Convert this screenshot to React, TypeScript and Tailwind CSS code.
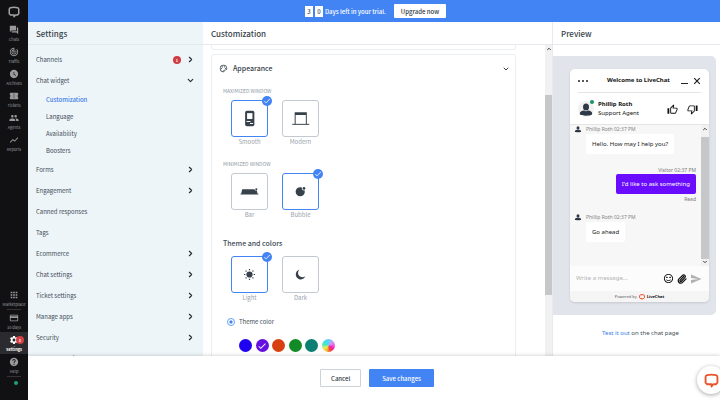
import { useState, type ComponentType, type ReactNode } from 'react';
import {
  MdApps,
  MdCheck,
  MdConfirmationNumber,
  MdCreditCard,
  MdForum,
  MdHelp,
  MdOutlinePalette,
  MdOutlineThumbDown,
  MdOutlineThumbUp,
  MdPeople,
  MdSend,
  MdSentimentSatisfiedAlt,
  MdSettings,
  MdShowChart,
  MdTrackChanges,
  MdWatchLater,
} from 'react-icons/md';
import { ChevronDown, ChevronRight, ChevronUp, Paperclip } from 'lucide-react';

type IconType = ComponentType<{ className?: string }>;

/* ---------- Left navigation rail ---------- */

function LogoMark({ className, stroke = 3 }: { className?: string; stroke?: number }) {
  return (
    <svg viewBox="0 0 24 24" className={className} fill="none" stroke="currentColor" strokeWidth={stroke} strokeLinejoin="round" aria-hidden="true">
      <path d="M5 3.500C9.500 2.400 14.500 2.400 19 3.500C20.500 3.900 21.500 5 21.500 6.500V15.500L19 18H15L12 21.500V18H5L2.500 15.500V6.500C2.500 5 3.500 3.900 5 3.500Z" />
    </svg>
  );
}

function NavItem({ icon: Icon, label, active, badge }: { icon: IconType; label: string; active?: boolean; badge?: string }) {
  return (
    <a
      href="#"
      className={`relative flex h-[22px] shrink-0 flex-col items-center justify-center text-[4px] leading-[6px] ${
        active ? 'bg-[#2b2b2f] font-bold text-white' : 'text-[#9a9a9d]'
      }`}
    >
      <Icon className="mb-px size-[10px]" />
      {label}
      {badge && (
        <span className="absolute top-[4px] right-[4px] flex size-[8px] items-center justify-center rounded-full bg-[#d64045] text-[4px] text-white">
          {badge}
        </span>
      )}
    </a>
  );
}

function NavRail() {
  return (
    <nav className="flex w-7 shrink-0 flex-col bg-[#111114]">
      <LogoMark className="mx-auto mt-[6px] mb-[4px] size-[12px] shrink-0 text-[#a2a2a5]" />
      <NavItem icon={MdForum} label="Chats" />
      <NavItem icon={MdTrackChanges} label="Traffic" />
      <NavItem icon={MdWatchLater} label="Archives" />
      <NavItem icon={MdConfirmationNumber} label="Tickets" />
      <NavItem icon={MdPeople} label="Agents" />
      <NavItem icon={MdShowChart} label="Reports" />
      <div className="mt-auto flex flex-col">
        <NavItem icon={MdApps} label="Marketplace" />
        <hr className="mx-[7px] border-[#3a3232]" />
        <NavItem icon={MdCreditCard} label="30 days" />
        <NavItem icon={MdSettings} label="Settings" badge="1" active />
        <NavItem icon={MdHelp} label="Help" />
        <hr className="mx-[7px] border-[#3a3232]" />
        <span className="mt-[4px] mr-[10px] mb-[15px] size-[4px] self-end rounded-full bg-[#1fa06c]" />
      </div>
    </nav>
  );
}

/* ---------- Settings menu ---------- */

type MenuEntry = { label: string; arrow?: boolean; open?: boolean; badge?: string; children?: string[] };

const menu: MenuEntry[] = [
  { label: 'Channels', arrow: true, badge: '1' },
  { label: 'Chat widget', open: true, children: ['Customization', 'Language', 'Availability', 'Boosters'] },
  { label: 'Forms', arrow: true },
  { label: 'Engagement', arrow: true },
  { label: 'Canned responses' },
  { label: 'Tags' },
  { label: 'Ecommerce', arrow: true },
  { label: 'Chat settings', arrow: true },
  { label: 'Ticket settings', arrow: true },
  { label: 'Manage apps', arrow: true },
  { label: 'Security', arrow: true },
  { label: 'Data Tools Privacy' },
];

function ColumnTitle({ children, className }: { children: ReactNode; className: string }) {
  return (
    <h2 className={`flex h-[23px] shrink-0 items-center border-b border-[#e6eaee] pt-[2px] text-[8px] font-medium text-[#38414a] ${className}`}>
      {children}
    </h2>
  );
}

function SettingsMenu() {
  return (
    <aside className="flex w-[175px] shrink-0 flex-col overflow-hidden bg-[#eef5f9]">
      <ColumnTitle className="px-2">Settings</ColumnTitle>
      <ul className="pt-1">
        {menu.map((m) => (
          <li key={m.label}>
            <a href="#" className="flex h-[21px] items-center pr-[8px] pl-2 text-[6px] text-[#424d57]">
              <span className="mr-auto">{m.label}</span>
              {m.badge && (
                <span className="mr-[5px] flex size-[8px] items-center justify-center rounded-full bg-[#d13b40] text-[4px] font-bold text-white">
                  {m.badge}
                </span>
              )}
              {m.arrow && <ChevronRight className="size-[9px] text-[#222b33]" strokeWidth={3} />}
              {m.open && <ChevronDown className="size-[9px] text-[#222b33]" strokeWidth={3} />}
            </a>
            {m.children && (
              <ul>
                {m.children.map((c, i) => (
                  <li key={c}>
                    <a href="#" className={`flex h-[17px] items-center pl-[18px] text-[6px] ${i === 0 ? 'font-medium text-[#3a7be8]' : 'text-[#424d57]'}`}>
                      {c}
                    </a>
                  </li>
                ))}
              </ul>
            )}
          </li>
        ))}
      </ul>
    </aside>
  );
}

/* ---------- Customization column ---------- */

function Scrollbar({ className, thumb, endArrow }: { className: string; thumb: string; endArrow?: boolean }) {
  return (
    <div className={`flex shrink-0 flex-col items-center bg-[#f1f1f2] ${className}`} aria-hidden="true">
      <ChevronUp className="my-px size-[6px] shrink-0 text-[#444]" strokeWidth={4} />
      <span className={`w-full bg-[#c6c7c9] ${thumb}`} />
      {endArrow && <ChevronDown className="mt-auto mb-px size-[6px] shrink-0 text-[#444]" strokeWidth={4} />}
    </div>
  );
}

function Glyph({ name }: { name: string }) {
  return (
    <svg viewBox="0 0 36 36" className="size-full" fill="#37414c" aria-hidden="true">
      {name === 'Smooth' && (
        <>
          <rect x="13.500" y="10" width="9.500" height="16" rx="1.800" />
          <rect x="15.500" y="12.500" width="5.500" height="6" fill="#fff" />
          <path d="M15 20.500h4v1.200h-4zM18.500 22.500h3v1.200h-3z" fill="#fff" />
        </>
      )}
      {name === 'Modern' && (
        <>
          <path d="M12 11.500h12.500V24h-1V14.500H13V24h-1z" />
          <rect x="9.500" y="23.500" width="17.500" height="1" />
        </>
      )}
      {name === 'Bar' && (
        <>
          <path d="M10.500 15.700h12.500l.8 1.200h1.700l.8 3.300h.9v1H8.700v-1h.7z" />
          <circle cx="25" cy="15.700" r="1.100" />
        </>
      )}
      {name === 'Bubble' && (
        <>
          <circle cx="17.700" cy="18.200" r="4.700" />
          <circle cx="21.500" cy="14.800" r="2.100" fill="#fff" />
          <circle cx="21.600" cy="14.800" r="1.400" />
        </>
      )}
      {name === 'Light' && (
        <>
          <circle cx="18" cy="18" r="3.200" />
          <path
            d="M18 12.300v1.400M18 22.300v1.400M12.300 18h1.400M22.300 18h1.400M14 14l.9.900M21.100 21.100l.9.900M14 22l.9-.9M21.100 14.900l.9-.9"
            stroke="#37414c"
            strokeWidth="1.200"
          />
        </>
      )}
      {name === 'Dark' && <path d="M17 13a5.100 5.100 0 1 0 6 6.800a4.500 4.500 0 0 1-6-6.800z" />}
    </svg>
  );
}

function TileGroup({ legend, name, options, initial }: { legend: ReactNode; name: string; options: string[]; initial: string }) {
  const [value, setValue] = useState(initial);
  return (
    <fieldset>
      {legend}
      <div className="flex gap-[14px] pl-2">
        {options.map((o) => {
          const on = o === value;
          return (
            <label key={o} className="relative flex w-[37px] flex-col text-center text-[6px] leading-[9px] text-[#9aa3ad]">
              <input type="radio" name={name} checked={on} onChange={() => setValue(o)} className="sr-only" />
              <span className={`block h-[37px] rounded-[3px] border bg-white ${on ? 'border-[#4384f5]' : 'border-[#c3c9d0]'}`}>
                <Glyph name={o} />
              </span>
              {o}
              {on && (
                <span className="absolute -top-[4px] -right-[4px] flex size-[10px] items-center justify-center rounded-full bg-[#4384f5] text-white">
                  <MdCheck className="size-[8px]" />
                </span>
              )}
            </label>
          );
        })}
      </div>
    </fieldset>
  );
}

const swatches = [
  { name: 'Blue', fill: 'bg-[#1f00f0]' },
  { name: 'Purple', fill: 'bg-[#6610e0]' },
  { name: 'Orange', fill: 'bg-[#d9400f]' },
  { name: 'Green', fill: 'bg-[#128a26]' },
  { name: 'Teal', fill: 'bg-[#0b7f72]' },
  { name: 'Custom', fill: 'bg-[conic-gradient(from_0deg,#5fd0f5,#b9a6f8,#f06ae0,#f01fc0,#f5403a,#f7c02a,#d8f060,#4fe8b0,#3fe0f0,#5fd0f5)]' },
];

function ThemeColor() {
  const [color, setColor] = useState('Purple');
  return (
    <fieldset>
      <label className="mt-[14px] flex items-center gap-[4px] pl-[4px] text-[6px] leading-[12px] text-[#424d57]">
        <input
          type="radio"
          name="color-mode"
          defaultChecked
          className="size-[8px] appearance-none rounded-full border border-[#6b9ff7] bg-white checked:bg-[radial-gradient(circle,#4384f5_30%,#fff_45%)]"
        />
        Theme color
      </label>
      <div className="mt-[11px] flex w-[112px] justify-between pl-4">
        {swatches.map((s) => (
          <label key={s.name} className={`flex size-[13px] items-center justify-center rounded-full ${s.fill}`}>
            <input type="radio" name="color" aria-label={s.name} checked={color === s.name} onChange={() => setColor(s.name)} className="sr-only" />
            {color === s.name && <MdCheck className="size-[10px] text-white" />}
          </label>
        ))}
      </div>
    </fieldset>
  );
}

function SectionLabel({ children }: { children: ReactNode }) {
  return <legend className="mb-[5px] text-[5px] leading-[8px] text-[#8d97a1]">{children}</legend>;
}

function Customization() {
  return (
    <section className="flex min-w-0 flex-1 flex-col overflow-hidden">
      <ColumnTitle className="px-2">Customization</ColumnTitle>
      <div className="flex min-h-0 flex-1">
        <div className="min-w-0 flex-1 overflow-hidden pr-[29px] pl-2">
          <div className="h-[5px] rounded-b-[3px] border-x border-b border-[#eceff2]" />
          <div className="mt-[4px] rounded-t-[3px] border border-[#eceff2] px-[7px] pb-8">
            <button type="button" className="flex h-[27px] w-full items-center text-[7px] font-medium text-[#38414a]">
              <MdOutlinePalette className="mr-[5px] size-[9px]" />
              Appearance
              <ChevronDown className="mr-[-2px] ml-auto size-[8px]" strokeWidth={3} />
            </button>
            <div className="px-1">
              <div className="pt-[5px]">
                <TileGroup legend={<SectionLabel>MAXIMIZED WINDOW</SectionLabel>} name="maximized" options={['Smooth', 'Modern']} initial="Smooth" />
              </div>
              <div className="pt-[14px]">
                <TileGroup legend={<SectionLabel>MINIMIZED WINDOW</SectionLabel>} name="minimized" options={['Bar', 'Bubble']} initial="Bubble" />
              </div>
              <div className="pt-[19px]">
                <TileGroup
                  legend={<legend className="mb-[8px] text-[7px] leading-[10px] font-medium text-[#424d57]">Theme and colors</legend>}
                  name="theme"
                  options={['Light', 'Dark']}
                  initial="Light"
                />
              </div>
              <ThemeColor />
            </div>
          </div>
        </div>
        <Scrollbar className="w-[7px]" thumb="mt-[42px] h-[200px]" />
      </div>
    </section>
  );
}

/* ---------- Chat preview ---------- */

function Avatar({ className }: { className: string }) {
  return (
    <span className={`block shrink-0 overflow-hidden rounded-full text-[#2f3946] ${className}`}>
      <svg viewBox="0 0 16 16" className="size-full" fill="currentColor" aria-hidden="true">
        <ellipse cx="8" cy="6" rx="3" ry="3.600" />
        <path d="M1.500 13.500c0-2.800 2.500-4 4.700-4.100c1 1 2.600 1 3.600 0c2.200.1 4.700 1.300 4.700 4.100c-2 1.600-11 1.600-13 0z" />
      </svg>
    </span>
  );
}

function AgentMessage({ children }: { children: ReactNode }) {
  return (
    <div className="flex gap-[4px]">
      <Avatar className="size-[8px]" />
      <div>
        <p className="text-[5px] leading-[8px] text-[#858585]">Phillip Roth 02:37 PM</p>
        <p className="mt-px w-fit rounded-[2px] bg-white px-[6px] text-[6px] leading-[20px] text-[#222]">{children}</p>
      </div>
    </div>
  );
}

function ChatWidget() {
  return (
    <div className="overflow-hidden rounded-[5px] bg-white font-['Noto_Sans',sans-serif] text-[#111] shadow-sm">
      <header className="mx-2 flex h-[24px] items-center border-b border-[#e4e4e4]">
        <button type="button" aria-label="Menu" className="flex gap-[2px]">
          <i className="size-[2px] rounded-full bg-[#222]" />
          <i className="size-[2px] rounded-full bg-[#222]" />
          <i className="size-[2px] rounded-full bg-[#222]" />
        </button>
        <h3 className="mx-auto pl-[8px] text-[6px] font-bold">Welcome to LiveChat</h3>
        <button type="button" aria-label="Minimize" className="mt-[5px] mr-[5px] h-px w-[7px] bg-[#222]" />
        <button type="button" aria-label="Close">
          <svg viewBox="0 0 10 10" className="size-[8px]" stroke="#222" strokeWidth="1.500" aria-hidden="true">
            <path d="M1.500 1.500l7 7M8.500 1.500l-7 7" />
          </svg>
        </button>
      </header>
      <div className="flex h-[31px] items-center px-2 pt-px">
        <span className="relative mr-[4px]">
          <Avatar className="size-4 bg-[#f1f1f3]" />
          <i className="absolute -top-px right-0 size-[4px] rounded-full bg-[#18955f]" />
        </span>
        <p className="mr-auto text-[6px] leading-[9px]">
          <b className="block">Phillip Roth</b>
          Support Agent
        </p>
        <button type="button" aria-label="Rate as good" className="mr-[9px]">
          <MdOutlineThumbUp className="size-[11px]" />
        </button>
        <button type="button" aria-label="Rate as bad" className="mr-[3px]">
          <MdOutlineThumbDown className="size-[11px]" />
        </button>
      </div>
      <div className="flex h-[142px] border-t border-[#e4e4e4] bg-[#f7f7f7]">
        <div className="flex-1 pr-[5px] pl-[4px]">
          <AgentMessage>Hello. How may I help you?</AgentMessage>
          <div className="mt-[12px] mb-[10px] flex flex-col items-end text-[5px] leading-[8px] text-[#7a7a7a]">
            <p>Visitor 02:37 PM</p>
            <p className="rounded-[2px] bg-[#6a0dff] px-[6px] text-[6px] leading-[20px] text-white">I&#39;d like to ask something</p>
            <p className="mt-px">Read</p>
          </div>
          <AgentMessage>Go ahead</AgentMessage>
        </div>
        <Scrollbar className="w-[8px]" thumb="mt-[4px] h-[122px]" endArrow />
      </div>
      <form className="flex h-[25px] items-center gap-[3px] bg-[#fcfcfc] pr-[7px] pl-[6px]">
        <input aria-label="Write a message" placeholder="Write a message..." className="w-0 flex-1 bg-transparent text-[6px] outline-none placeholder:text-[#b3b3b3]" />
        <button type="button" aria-label="Emoji">
          <MdSentimentSatisfiedAlt className="size-[11px]" />
        </button>
        <button type="button" aria-label="Attach">
          <Paperclip className="size-[10px]" strokeWidth={3} />
        </button>
        <button type="button" aria-label="Send">
          <MdSend className="size-[12px] text-[#b0b0b0]" />
        </button>
      </form>
      <p className="flex h-[11px] items-center justify-center gap-[2px] bg-[#f5f5f5] text-[4px] text-[#555]">
        Powered by <LogoMark className="size-[6px] text-[#f0502a]" stroke={4} />
        <b className="text-[#111]">LiveChat</b>
      </p>
    </div>
  );
}

function Preview() {
  return (
    <section className="flex w-[168px] shrink-0 flex-col overflow-hidden border-l border-[#e6eaee]">
      <ColumnTitle className="px-2">Preview</ColumnTitle>
      <div className="mt-[11px] mr-1 rounded-r-[5px] bg-[#e1e5eb] pt-[13px] pr-[7px] pb-[13px] pl-[17px]">
        <ChatWidget />
      </div>
      <p className="mt-[13px] pl-2 text-center font-['Noto_Sans',sans-serif] text-[6px] leading-[10px] text-[#424d57]">
        <a href="#" className="text-[#3a7be8]">
          Test it out
        </a>{' '}
        on the chat page
      </p>
    </section>
  );
}

/* ---------- Page ---------- */

export default function App() {
  return (
    <div className="flex h-screen overflow-hidden bg-white font-['Noto_Sans_CJK_SC',sans-serif]">
      <NavRail />
      <div className="flex min-w-0 flex-1 flex-col">
        <div className="flex h-[22px] shrink-0 items-center justify-center bg-[#4384f5] pl-[3px] text-[6px] font-medium text-white">
          <span className="mr-[2px] flex h-[11px] w-[8px] items-center justify-center bg-white text-[#3f4a54]">3</span>
          <span className="mr-[2px] flex h-[11px] w-[8px] items-center justify-center bg-white text-[#3f4a54]">0</span>
          Days left in your trial.
          <button type="button" className="ml-2 h-[14px] rounded-[1px] bg-white px-[7px] text-[#2e3740]">
            Upgrade now
          </button>
        </div>
        <div className="flex min-h-0 flex-1">
          <SettingsMenu />
          <Customization />
          <Preview />
        </div>
        <footer className="relative flex h-[44px] shrink-0 items-center justify-center gap-2 bg-white pl-[6px] text-[6px] font-medium shadow-[0_-1px_3px_rgba(0,0,0,0.15)]">
          <button type="button" className="h-[18px] rounded-[1px] border border-[#cdd2d8] px-[10px] text-[#2e3740]">
            Cancel
          </button>
          <button type="button" className="h-[18px] rounded-[1px] bg-[#4384f5] px-[13px] text-white">
            Save changes
          </button>
          <button type="button" aria-label="Open chat" className="absolute top-[10px] -right-[5px] flex size-[28px] items-center justify-center rounded-full bg-white shadow-[0_1px_4px_rgba(0,0,0,0.35)]">
            <LogoMark className="size-[15px] text-[#e8552b]" />
          </button>
        </footer>
      </div>
    </div>
  );
}
